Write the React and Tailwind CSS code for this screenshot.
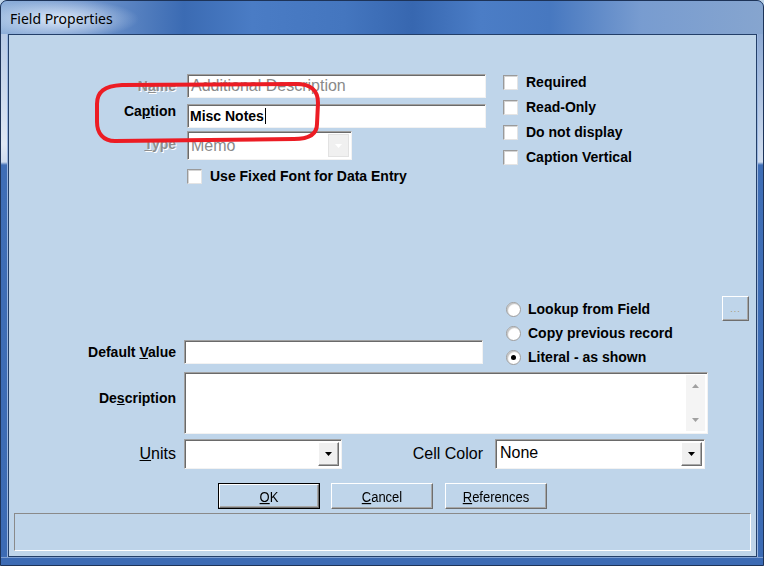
import React from "react";

const sunken =
  "bg-white border border-t-[#a0a0a0] border-l-[#a0a0a0] border-b-[#f2f2f2] border-r-[#f2f2f2] shadow-[inset_1px_1px_0_#6a6a6a]";
const raised =
  "border border-t-[#ffffff] border-l-[#ffffff] border-b-[#6e6e6e] border-r-[#6e6e6e] shadow-[inset_-1px_-1px_0_#a8a8a8]";

function Tri({ color = "#000" }) {
  return (
    <svg width="7" height="4" viewBox="0 0 7 4">
      <path d="M0 0H7L3.5 4Z" fill={color} />
    </svg>
  );
}

function TriUp({ color = "#a0a0a0" }) {
  return (
    <svg width="7" height="4" viewBox="0 0 7 4">
      <path d="M0 4H7L3.5 0Z" fill={color} />
    </svg>
  );
}

function Check({ label }) {
  return (
    <div className="flex items-center h-[16px] gap-[8px] shrink-0">
      <span className="w-[15px] h-[15px] shrink-0 bg-white border border-t-[#9a9a9a] border-l-[#9a9a9a] border-b-[#e4e4e4] border-r-[#e4e4e4] shadow-[inset_1px_1px_0_#d4d4d4]" />
      <span className="text-[14px] font-bold leading-[16px] whitespace-nowrap">{label}</span>
    </div>
  );
}

function Radio({ label, on }) {
  return (
    <div className="flex items-center h-[24px] shrink-0 gap-[7px]">
      <span className="w-[15px] h-[15px] shrink-0 rounded-full bg-white border border-[#9c9c9c] shadow-[inset_1px_1px_1px_#c0c0c0] flex items-center justify-center">
        {on && <span className="w-[5px] h-[5px] rounded-full bg-black" />}
      </span>
      <span className="text-[14px] font-bold leading-[16px] whitespace-nowrap">{label}</span>
    </div>
  );
}

function Combo({ w, h, text, disabled, textClass = "" }) {
  return (
    <div className={`${sunken} ${w} ${h} flex items-stretch p-[2px] shrink-0`}>
      <div className={`flex-1 flex items-center pl-[1px] ${textClass}`}>{text}</div>
      <div
        className={`w-[21px] flex items-center justify-center ${
          disabled
            ? "bg-[#f0f0f0] border border-[#e2e2e2]"
            : "bg-[#f0f0f0] " + raised
        }`}
      >
        <Tri color={disabled ? "#ffffff" : "#000000"} />
      </div>
    </div>
  );
}

function Btn({ children, def }) {
  return (
    <div
      className={`w-[102px] h-[26px] shrink-0 ${
        def ? "border border-black" : ""
      } bg-[#bfd5ea]`}
    >
      <div
        className={`w-full h-full ${raised} flex items-center justify-center`}
      >
        <span className="text-[13px] leading-none scale-y-[1.18] inline-block">{children}</span>
      </div>
    </div>
  );
}

const labelB = "text-[14px] font-bold leading-[16px] text-right whitespace-nowrap";
const labelDis =
  "text-[14px] font-bold leading-[16px] text-right whitespace-nowrap text-[#8e8e8e] [text-shadow:1px_1px_0_#ffffff]";

export default function App() {
  return (
    <div className="relative w-[764px] h-[566px] overflow-hidden font-['Liberation_Sans',Arial,sans-serif] text-black bg-[#bfd5ea]">
      <div className="w-full h-full flex flex-col rounded-t-[7px] border border-[#1d3358] bg-[#3c6bb4] overflow-hidden">
        {/* Title bar */}
        <div className="h-[33px] shrink-0 flex items-center pl-[9px] bg-[radial-gradient(ellipse_80px_20px_at_58px_18px,rgba(225,236,250,0.95),rgba(225,236,250,0)),linear-gradient(90deg,#8fb0da_0%,#7196cd_11%,#3b6bb3_24%,#4a7cc5_33%,#4476bf_45%,#3767b0_54%,#4b7dc6_63%,#4778c0_72%,#789cd0_84%,#86a5cf_100%)]">
          <span className="font-['Noto_Sans',sans-serif] text-[14px] leading-none mt-[3px]">
            Field Properties
          </span>
        </div>
        <div className="flex shrink-0">
          {/* left frame */}
          <div className="w-[7px] h-[523px] border-r border-r-[#9ab6e0] bg-[linear-gradient(to_bottom,#b8cbe6_0px,#dfe8f4_110px,#cfdcee_128px,#3f6eb6_131px,#3c6bb4_100%)]" />
          {/* client */}
          <div className="w-[749px] h-[523px] border border-[#233f69] bg-[#bfd5ea] flex flex-col overflow-hidden">
            {/* Top section */}
            <div className="flex mt-[39px]">
              <div className="w-[477px] flex flex-col">
                <div className="flex items-center h-[24px]">
                  <div className={`w-[167px] ${labelDis}`}>
                    N<span className="underline">a</span>me
                  </div>
                  <div className={`${sunken} ml-[11px] w-[299px] h-[24px] flex items-center pl-[3px] text-[16px] text-[#8a8a8a]`}>
                    Additional Description
                  </div>
                </div>
                <div className="flex items-center h-[24px] mt-[6px]">
                  <div className={`w-[167px] mb-[11px] ${labelB}`}>
                    Ca<span className="underline">p</span>tion
                  </div>
                  <div className={`${sunken} ml-[11px] w-[299px] h-[24px] flex items-center pl-[2px] text-[14px] font-bold`}>
                    Misc Notes
                    <span className="w-[1px] h-[16px] bg-black ml-[1px]" />
                  </div>
                </div>
                <div className="flex items-center h-[29px] mt-[3px]">
                  <div className={`w-[167px] mb-[3px] ${labelDis}`}>
                    <span className="underline">T</span>ype
                  </div>
                  <div className="ml-[11px]">
                    <Combo
                      w="w-[165px]"
                      h="h-[29px]"
                      text="Memo"
                      disabled
                      textClass="text-[16px] text-[#8a8a8a]"
                    />
                  </div>
                </div>
                <div className="mt-[8px] pl-[178px]">
                  <Check label="Use Fixed Font for Data Entry" />
                </div>
              </div>
              <div className="ml-[17px] flex flex-col gap-[9px]">
                <Check label="Required" />
                <Check label="Read-Only" />
                <Check label="Do not display" />
                <Check label="Caption Vertical" />
              </div>
            </div>

            {/* Bottom section */}
            <div className="mt-[112px] flex h-[68px]">
              <div className="w-[474px] flex items-end">
                <div className="flex items-center h-[24px]">
                  <div className={`w-[167px] ${labelB}`}>
                    Default <span className="underline">V</span>alue
                  </div>
                  <div className={`${sunken} ml-[8px] w-[299px] h-[24px]`} />
                </div>
              </div>
              <div className="ml-[23px] w-[216px] pt-[1px] flex flex-col">
                <Radio label="Lookup from Field" />
                <Radio label="Copy previous record" />
                <Radio label="Literal - as shown" on />
              </div>
              <div className={`w-[27px] h-[25px] ${raised} bg-[#bfd5ea] flex items-end justify-center pb-[6px]`}>
                <span className="text-[9px] leading-none tracking-[1px] text-[#a89878]">...</span>
              </div>
            </div>

            <div className="mt-[8px] flex">
              <div className={`w-[167px] pt-[18px] ${labelB}`}>
                De<span className="underline">s</span>cription
              </div>
              <div className={`${sunken} ml-[8px] w-[524px] h-[62px] flex justify-end p-[2px]`}>
                <div className="w-[19px] h-full bg-[#f4f4f4] flex flex-col items-center justify-between py-[9px]">
                  <TriUp />
                  <Tri color="#a0a0a0" />
                </div>
              </div>
            </div>

            <div className="mt-[5px] flex items-center h-[30px]">
              <div className="w-[167px] text-[16px] leading-[18px] text-right">
                <span className="underline">U</span>nits
              </div>
              <div className="ml-[8px]">
                <Combo w="w-[158px]" h="h-[30px]" text="" />
              </div>
              <div className="w-[141px] text-[16px] leading-[18px] text-right whitespace-nowrap">
                Cell Color
              </div>
              <div className="ml-[12px]">
                <Combo
                  w="w-[210px]"
                  h="h-[30px]"
                  text="None"
                  textClass="text-[16px] pb-[3px] pl-[2px]"
                />
              </div>
            </div>

            <div className="mt-[14px] flex pl-[209px] h-[26px]">
              <Btn def>
                <span className="underline">O</span>K
              </Btn>
              <div className="ml-[11px]">
                <Btn>
                  <span className="underline">C</span>ancel
                </Btn>
              </div>
              <div className="ml-[12px]">
                <Btn>
                  <span className="underline">R</span>eferences
                </Btn>
              </div>
            </div>

            <div className="mt-[4px] ml-[5px] w-[737px] h-[38px] border border-t-[#8a8a8a] border-l-[#8a8a8a] border-b-[#ffffff] border-r-[#ffffff]" />
          </div>
          {/* right frame */}
          <div className="w-[6px] h-[523px] border-l border-l-[#9ab6e0] bg-[linear-gradient(to_bottom,#8eaad4_0px,#c8d7ec_110px,#cfdcee_128px,#3f6eb6_131px,#3c6bb4_100%)]" />
        </div>
        <div className="flex-1 bg-[#3c6bb4] border-t border-t-[#7fa0d2]" />
      </div>

      {/* red annotation */}
      <svg
        className="absolute left-0 top-0 pointer-events-none"
        width="764"
        height="566"
        viewBox="0 0 764 566"
      >
        <path
          d="M122 85 L296 84 C312 84 318 91 318 103 L317 124 C317 134 310 139 294 139 L115 141 C103 141 97 133 97 122 L97 104 C97 92 104 86 122 85 Z"
          fill="none"
          stroke="#ec1c24"
          strokeWidth="4"
        />
      </svg>
    </div>
  );
}
